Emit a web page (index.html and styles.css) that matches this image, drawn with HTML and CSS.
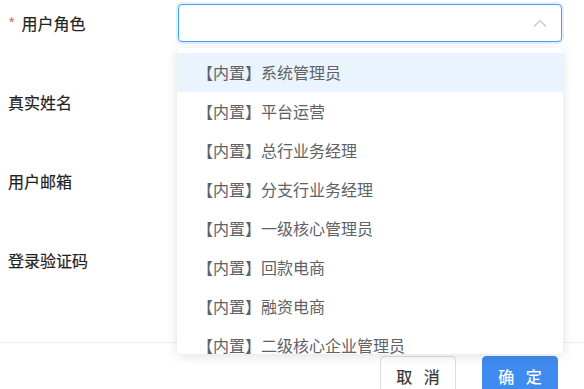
FILE: index.html
```html
<!DOCTYPE html>
<html lang="zh-CN">
<head>
    <meta charset="UTF-8">
    <meta name="viewport" content="width=device-width, initial-scale=1.0">
    <title>用户编辑</title>
    <link rel="stylesheet" href="styles.css">
</head>
<body>
    <div class="dialog-body">
        <div class="form-item">
            <label class="form-label"><span class="required">*</span>用户角色</label>
            <div class="form-control">
                <div class="select is-focus">
                    <input class="select-input" type="text" readonly>
                    <svg class="select-arrow" width="14" height="8" viewBox="0 0 14 8">
                        <polyline points="1,7.5 7,1.5 13,7.5" fill="none" stroke="#c0c4cc" stroke-width="1.2"/>
                    </svg>
                </div>
                <ul class="select-dropdown">
                    <li class="hover">【内置】系统管理员</li>
                    <li>【内置】平台运营</li>
                    <li>【内置】总行业务经理</li>
                    <li>【内置】分支行业务经理</li>
                    <li>【内置】一级核心管理员</li>
                    <li>【内置】回款电商</li>
                    <li>【内置】融资电商</li>
                    <li>【内置】二级核心企业管理员</li>
                </ul>
            </div>
        </div>
        <div class="form-item">
            <label class="form-label">真实姓名</label>
            <div class="form-control"></div>
        </div>
        <div class="form-item">
            <label class="form-label">用户邮箱</label>
            <div class="form-control"></div>
        </div>
        <div class="form-item">
            <label class="form-label">登录验证码</label>
            <div class="form-control"></div>
        </div>
    </div>
    <div class="dialog-footer">
        <button class="btn">取 消</button>
        <button class="btn btn-primary">确 定</button>
    </div>
</body>
</html>
```

FILE: styles.css
```css
* {
    box-sizing: border-box;
}
body {
    margin: 0;
    font-family: "Helvetica Neue", "Noto Sans CJK SC", "Liberation Sans", sans-serif;
    font-size: 16px;
    color: #303133;
    background: #fff;
    overflow: hidden;
}
.dialog-body {
    height: 342px;
    padding: 4px 22px 0 8px;
}
.form-item {
    display: flex;
    align-items: center;
    height: 38px;
    margin-bottom: 41px;
}
.form-label {
    width: 170px;
    flex-shrink: 0;
    color: #222;
    line-height: 38px;
    -webkit-text-stroke: 0.2px #222;
}
.required {
    color: #f56c6c;
    margin-right: 6px;
    -webkit-text-stroke: 0;
}
.form-control {
    position: relative;
    flex: 1;
    height: 38px;
}
.select {
    position: relative;
    height: 38px;
}
.select-input {
    width: 100%;
    height: 38px;
    border: 1px solid #dcdfe6;
    border-radius: 4px;
    outline: none;
    padding: 0 15px;
    font: inherit;
    background: #fff;
}
.select.is-focus .select-input {
    border-color: #409eff;
    box-shadow: 0 0 0 2px rgba(64, 158, 255, 0.15);
}
.select-arrow {
    position: absolute;
    right: 15px;
    top: 15px;
}
.select-dropdown {
    position: absolute;
    top: 44px;
    left: -1px;
    width: 386px;
    height: 306px;
    margin: 0;
    padding: 5px 0 0;
    list-style: none;
    background: #fff;
    border-radius: 4px;
    box-shadow: 0 2px 12px rgba(0, 0, 0, 0.12);
    overflow: hidden;
    z-index: 10;
}
.select-dropdown li {
    height: 39px;
    line-height: 39px;
    padding-left: 20px;
    color: #606266;
    white-space: nowrap;
}
.select-dropdown li.hover {
    background: #e9f4fe;
}
.dialog-footer {
    display: flex;
    justify-content: flex-end;
    gap: 26px;
    border-top: 1px solid #ebeef5;
    padding: 13px 26px 0 0;
}
.btn {
    width: 76px;
    height: 40px;
    padding: 0 0 0 4px;
    border: 1px solid #dcdfe6;
    border-radius: 4px;
    background: #fff;
    color: #333;
    font: inherit;
    letter-spacing: 4px;
    -webkit-text-stroke: 0.2px currentColor;
    cursor: pointer;
}
.btn-primary {
    background: #3f8bef;
    border-color: #3f8bef;
    color: #fff;
}
```
